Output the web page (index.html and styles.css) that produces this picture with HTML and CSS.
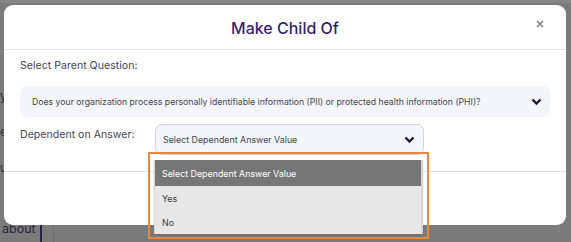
FILE: index.html
```html
<!DOCTYPE html>
<html lang="en">
<head>
    <meta charset="UTF-8">
    <meta name="viewport" content="width=device-width, initial-scale=1.0">
    <title>Make Child Of</title>
    <link rel="stylesheet" href="styles.css">
</head>
<body>
    <!-- page behind the overlay -->
    <div class="page">
        <div class="page-top"></div>
        <div class="page-side">
            <span class="frag">y)</span>
            <span class="frag">e</span>
            <span class="frag">u</span>
        </div>
        <div class="page-foot">
            <span class="about">about</span>
            <span class="rule-dark"></span>
            <span class="rule-light"></span>
        </div>
    </div>

    <!-- Make Child Of modal -->
    <div class="modal">
        <div class="modal-header">
            <h2>Make Child Of</h2>
            <button class="close-btn" aria-label="Close">
                <svg width="8" height="8" viewBox="0 0 8 8"><path d="M1 1 L7 7 M7 1 L1 7" stroke="#7c7c7c" stroke-width="1.5" fill="none"/></svg>
            </button>
        </div>
        <div class="modal-body">
            <p class="field-label">Select Parent Question:</p>
            <div class="select parent-select">
                <span>Does your organization process personally identifiable information (PII) or protected health information (PHI)?</span>
                <svg class="chevron" width="11" height="8" viewBox="0 0 11 8"><path d="M1.5 1.5 L5.5 5.5 L9.5 1.5" stroke="#1c1b3a" stroke-width="2.4" fill="none"/></svg>
            </div>
            <div class="answer-row">
                <label class="field-label">Dependent on Answer:</label>
                <div class="select-wrap">
                    <div class="select answer-select">
                        <span>Select Dependent Answer Value</span>
                        <svg class="chevron" width="11" height="8" viewBox="0 0 11 8"><path d="M1.5 1.5 L5.5 5.5 L9.5 1.5" stroke="#1c1b3a" stroke-width="2.4" fill="none"/></svg>
                    </div>
                    <div class="dropdown-frame">
                        <ul class="options">
                            <li class="active">Select Dependent Answer Value</li>
                            <li>Yes</li>
                            <li>No</li>
                        </ul>
                    </div>
                </div>
            </div>
        </div>
        <div class="modal-footer"></div>
    </div>
</body>
</html>
```
FILE: styles.css
```css
body {
    margin: 0;
    width: 571px;
    height: 242px;
    overflow: hidden;
    position: relative;
    background-color: #7b7b7b;
    font-family: Inter, "Noto Sans", sans-serif;
}

.page {
    display: flex;
    flex-direction: column;
    height: 242px;
}

.page-top {
    height: 3px;
    background-color: #868686;
}

.page-side {
    flex: 1;
    display: flex;
    flex-direction: column;
    padding-top: 86px;
    gap: 22px;
}

.frag {
    font-size: 12px;
    color: #2e2a40;
    line-height: 14px;
}

.page-foot {
    display: flex;
    align-items: flex-end;
    height: 20px;
}

.about {
    font-size: 12.5px;
    color: #2c2546;
    padding-left: 2px;
    width: 38px;
    line-height: 14px;
    align-self: flex-start;
}

.rule-dark {
    width: 2px;
    height: 17px;
    background-color: #2b2148;
}

.rule-light {
    width: 1px;
    height: 17px;
    margin-left: 11px;
    background-color: #6c6c6c;
}

.modal {
    position: absolute;
    top: 5px;
    left: 4px;
    width: 562px;
    height: 220px;
    background: #ffffff;
    border-radius: 9px;
    display: flex;
    flex-direction: column;
}

.modal-header {
    height: 44px;
    border-bottom: 1px solid #e1e1ea;
    display: flex;
    align-items: center;
    justify-content: center;
    position: relative;
}

.modal-header h2 {
    margin: 0;
    font-size: 16px;
    font-weight: 500;
    color: #3a1f68;
    padding-top: 1px;
}

.close-btn {
    position: absolute;
    right: 22px;
    top: 15px;
    background: none;
    border: none;
    padding: 0;
    line-height: 0;
}

.modal-body {
    padding: 7px 16px 16px 16px;
    border-bottom: 1px solid #e1e1ea;
}

.field-label {
    margin: 0;
    font-size: 10.6px;
    line-height: 18px;
    color: #464650;
}

.select {
    display: flex;
    align-items: center;
    justify-content: space-between;
    background-color: #f4f5fb;
    border-radius: 7px;
    color: #45454f;
}

.parent-select {
    margin-top: 11px;
    height: 31px;
    padding: 0 8px 0 12px;
    font-size: 8.7px;
}

.answer-row {
    display: flex;
    margin-top: 7px;
}

.answer-row .field-label {
    width: 135px;
    padding-top: 2px;
}

.select-wrap {
    position: relative;
}

.answer-select {
    width: 252px;
    height: 29px;
    padding: 0 8px 0 7px;
    border: 1px solid #d2d2d8;
    font-size: 8.85px;
}

.dropdown-frame {
    position: absolute;
    top: 28px;
    left: -7px;
    width: 281px;
    height: 87px;
    border: 2px solid #e5883c;
    padding: 6px 4px 0 4px;
    box-sizing: border-box;
}

.options {
    list-style: none;
    margin: 0;
    padding: 0;
    background-color: #e7e7e7;
    border-left: 1px solid #d6d6d6;
    border-right: 2px solid #d4d4d4;
    box-shadow: 0 1px 2px rgba(0, 0, 0, 0.15);
    font-size: 8.85px;
    color: #3c3c44;
}

.options li {
    height: 24px;
    line-height: 25px;
    padding-left: 7px;
}

.options li.active {
    height: 26px;
    line-height: 27px;
    background-color: #767676;
    color: #ffffff;
}

.modal-footer {
    flex: 1;
}
```
